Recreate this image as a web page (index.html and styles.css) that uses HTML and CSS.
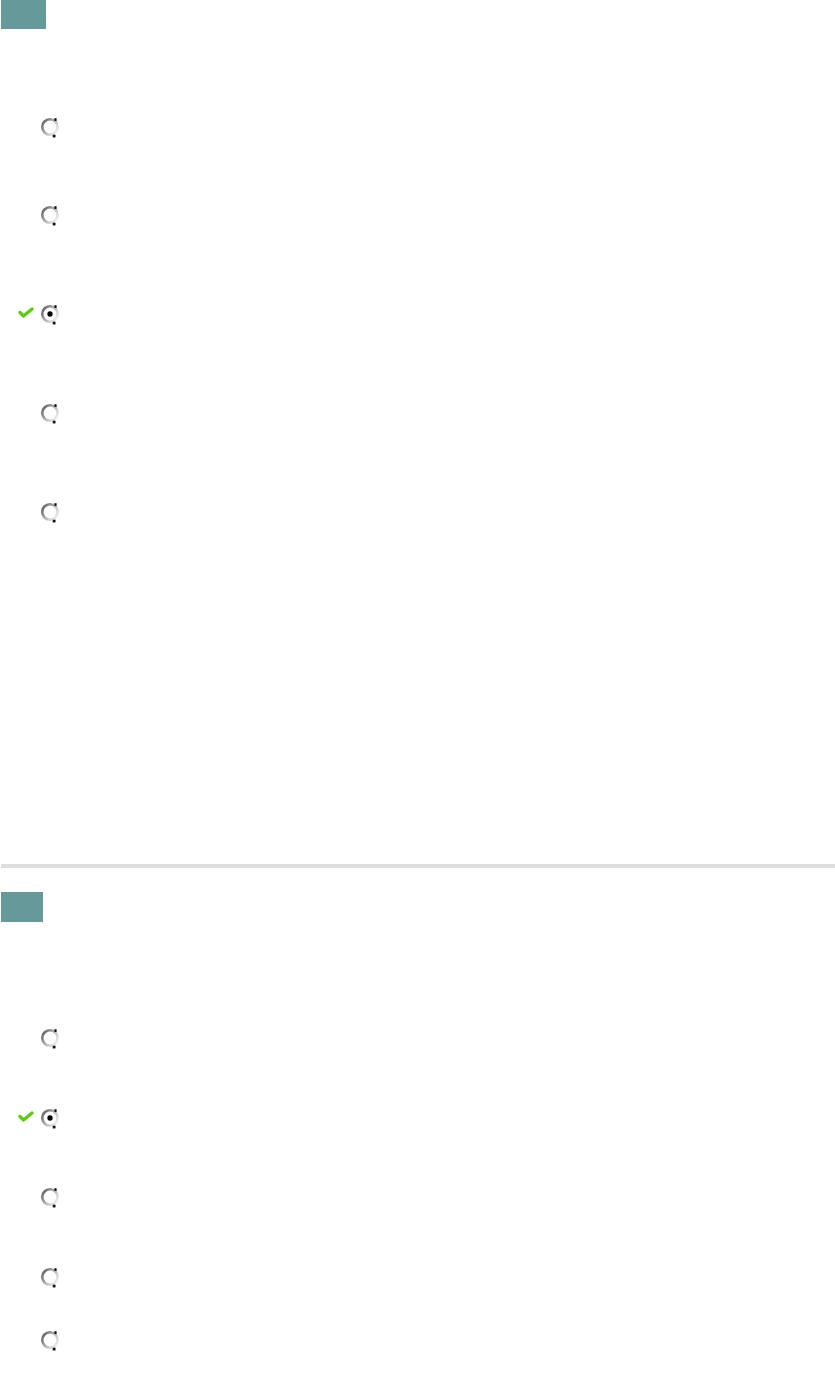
FILE: index.html
```html
<!DOCTYPE html>
<html>
<head>
<meta charset="utf-8">
<link rel="stylesheet" href="styles.css">
</head>
<body>
<section class="question q1">
  <div class="num num-wide"></div>
  <ul class="options">
    <li class="opt first1"><span class="mark"></span><svg class="radio" viewBox="0 0 18 20"><use href="#ring"/></svg></li>
    <li class="opt g88"><span class="mark"></span><svg class="radio" viewBox="0 0 18 20"><use href="#ring"/></svg></li>
    <li class="opt g99"><span class="mark"><svg class="check" viewBox="0 0 16 11"><use href="#tick"/></svg></span><svg class="radio" viewBox="0 0 18 20"><use href="#ring"/><circle cx="9" cy="10" r="2.4" fill="#000"/></svg></li>
    <li class="opt g99"><span class="mark"></span><svg class="radio" viewBox="0 0 18 20"><use href="#ring"/></svg></li>
    <li class="opt g99"><span class="mark"></span><svg class="radio" viewBox="0 0 18 20"><use href="#ring"/></svg></li>
  </ul>
</section>
<hr class="sep">
<section class="question q2">
  <div class="num num-narrow"></div>
  <ul class="options">
    <li class="opt first2"><span class="mark"></span><svg class="radio" viewBox="0 0 18 20"><use href="#ring"/></svg></li>
    <li class="opt g80"><span class="mark"><svg class="check" viewBox="0 0 16 11"><use href="#tick"/></svg></span><svg class="radio" viewBox="0 0 18 20"><use href="#ring"/><circle cx="9" cy="10" r="2.4" fill="#000"/></svg></li>
    <li class="opt g79"><span class="mark"></span><svg class="radio" viewBox="0 0 18 20"><use href="#ring"/></svg></li>
    <li class="opt g80"><span class="mark"></span><svg class="radio" viewBox="0 0 18 20"><use href="#ring"/></svg></li>
    <li class="opt g63"><span class="mark"></span><svg class="radio" viewBox="0 0 18 20"><use href="#ring"/></svg></li>
  </ul>
</section>
<svg class="defs" width="0" height="0">
  <defs>
    <linearGradient id="rg" gradientUnits="userSpaceOnUse" x1="2" y1="5" x2="16" y2="15">
      <stop offset="0" stop-color="#606060"/>
      <stop offset="0.5" stop-color="#b4b4b4"/>
      <stop offset="1" stop-color="#f4f4f4"/>
    </linearGradient>
    <g id="ring">
      <circle cx="9" cy="10" r="7" fill="#fff" stroke="url(#rg)" stroke-width="2.4"/>
      <rect x="13" y="2" width="2" height="2.5" fill="#111"/>
      <rect x="11.5" y="17" width="2.5" height="2.5" fill="#111"/>
    </g>
    <path id="tick" d="M2 5.5 L5.5 9 L14 2" fill="none" stroke="#5ccc10" stroke-width="3.4" stroke-linejoin="round" stroke-linecap="round"/>
  </defs>
</svg>
</body>
</html>
```
FILE: styles.css
```css
html, body {
  margin: 0;
  padding: 0;
  background: #ffffff;
  font-family: "Liberation Sans", Arial, sans-serif;
}
.question {
  display: flex;
  flex-direction: column;
}
.num {
  margin-left: 1px;
  height: 30px;
  background: #669999;
}
.num-wide { width: 45px; height: 29px; }
.num-narrow { width: 42px; }
.q1 { height: 864px; }
.q2 { margin-top: 24px; }
.options {
  list-style: none;
  margin: 0;
  padding: 0;
  display: flex;
  flex-direction: column;
}
.opt {
  display: flex;
  align-items: center;
  height: 22px;
}
.mark {
  width: 40px;
  height: 22px;
  display: flex;
  align-items: center;
  justify-content: flex-end;
  padding-right: 6px;
  box-sizing: border-box;
}
.check { width: 16px; height: 11px; margin-top: -4px; }
.radio { width: 20px; height: 22px; }
.first1 { margin-top: 87px; }
.first2 { margin-top: 105px; }
.g88 { margin-top: 66px; }
.g99 { margin-top: 77px; }
.g80 { margin-top: 58px; }
.g79 { margin-top: 57px; }
.g63 { margin-top: 41px; }
.sep {
  margin: 0 0 0 1px;
  height: 4px;
  border: 0;
  background: #dddddd;
}
.defs { position: absolute; }
```
